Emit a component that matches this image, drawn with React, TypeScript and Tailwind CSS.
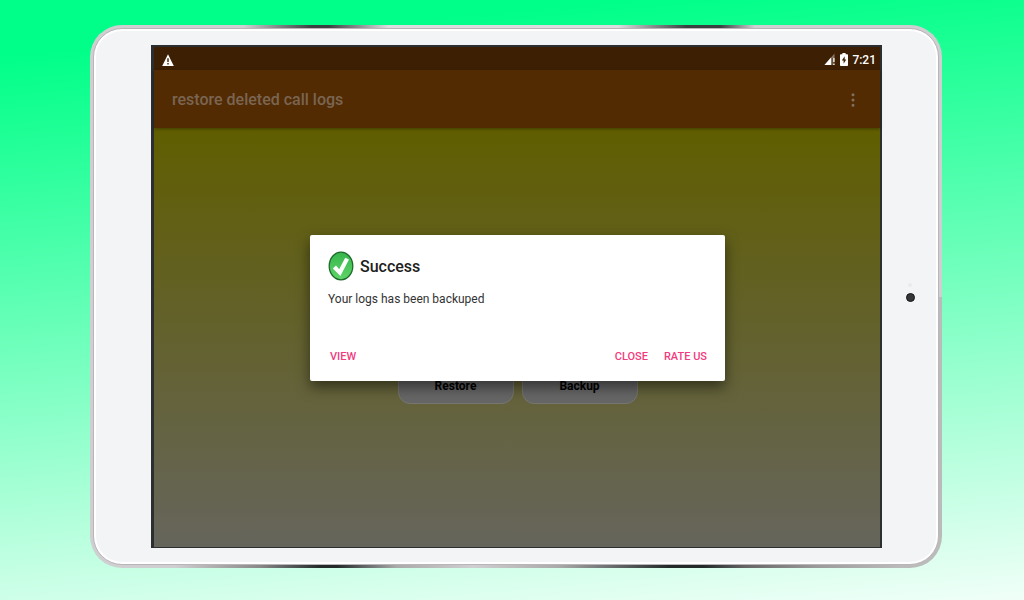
import { MoreVertical } from "lucide-react";

function WarningIcon() {
  return (
    <svg viewBox="0 0 12 12" className="size-3" aria-hidden="true">
      <path d="M6 0.3 11.8 12H0.2Z" fill="#fff" />
      <path d="M5.3 4.2h1.4v3.9H5.3zM5.3 9h1.4v1.4H5.3z" fill="#3d2004" />
    </svg>
  );
}

function SignalIcon() {
  return (
    <svg viewBox="0 0 12 13" className="h-[13px] w-3" aria-hidden="true">
      <path d="M10.5 0.5V5H8.6v7H0.5Z" fill="#8a7664" />
      <path d="M7 4.6V12H0.5Z" fill="#fff" />
      <path d="M9.2 5h1.4v4.2H9.2zM9.2 10.4h1.4V12H9.2z" fill="#fff" />
    </svg>
  );
}

function BatteryIcon() {
  return (
    <svg viewBox="0 0 8 13" className="h-[13px] w-2" aria-hidden="true">
      <path d="M2.4 0h3.2v1.2H7.2q.8 0 .8.8V12.2q0 .8-.8.8H.8Q0 13 0 12.2V2Q0 1.2.8 1.2H2.4Z" fill="#fff" />
      <path d="M4.7 3.3 1.8 7.6H3.6V10.8L6.3 6.5H4.7Z" fill="#3d2004" />
    </svg>
  );
}

function SuccessIcon() {
  return (
    <svg viewBox="0 0 26 30" className="h-[30px] w-[26px]" aria-hidden="true">
      <defs>
        <linearGradient id="disc" x1="0" y1="0" x2="0" y2="1">
          <stop offset="0" stopColor="#36b54c" />
          <stop offset="1" stopColor="#5fd668" />
        </linearGradient>
      </defs>
      <ellipse cx="13" cy="15" rx="11.8" ry="13.8" fill="url(#disc)" stroke="#1d6b2c" strokeWidth="1.3" />
      <path d="M4.8 17.6 8 14.4 11.2 18.2 17.2 6.8 21 8.6 12.4 25Z" fill="#fff" />
    </svg>
  );
}

function StatusBar() {
  return (
    <div className="flex h-[23px] items-center justify-between bg-[#3d2004] pt-0.5 pr-1 pl-2 text-white">
      <WarningIcon />
      <div className="flex items-center gap-1 text-xs font-medium">
        <SignalIcon />
        <BatteryIcon />
        <span>7:21</span>
      </div>
    </div>
  );
}

function AppBar() {
  return (
    <header className="flex h-[58px] items-center justify-between bg-[#522b03] pt-0.5 pr-[17px] pl-[18px] shadow-[0_1px_3px_rgba(0,0,0,0.35)]">
      <h1 className="text-base font-medium text-[#7a6552]">restore deleted call logs</h1>
      <button type="button" aria-label="More options" className="text-[#82705f]">
        <MoreVertical className="h-[18px] w-5" strokeWidth={2} />
      </button>
    </header>
  );
}

function SuccessDialog() {
  return (
    <div
      role="dialog"
      aria-labelledby="dialog-title"
      className="absolute top-[188px] right-[155px] left-[156px] flex h-[146px] flex-col rounded-xs bg-white px-[18px] pt-4 pb-3 shadow-[0_6px_14px_rgba(0,0,0,0.5)]"
    >
      <div className="flex items-center gap-1.5">
        <SuccessIcon />
        <h2 id="dialog-title" className="pt-0.5 text-base font-medium text-[#202020]">Success</h2>
      </div>
      <p className="mt-2 text-xs leading-5 text-[#333]">Your logs has been backuped</p>
      <div className="mt-auto flex items-center pl-0.5 text-[11px] leading-6 font-medium text-[#f23b7e]">
        <button type="button" className="mr-auto">VIEW</button>
        <button type="button" className="mr-4">CLOSE</button>
        <button type="button">RATE US</button>
      </div>
    </div>
  );
}

export default function App() {
  return (
    <main className="flex min-h-screen bg-[linear-gradient(175deg,#00ff88_8%,#f0fff8_100%)] pt-[25px] pr-[82px] pb-8 pl-[90px] font-[Roboto,sans-serif]">
      {/* Tablet rim, with the dark reflections along its top and bottom edges */}
      <div className="flex flex-1 rounded-[32px] bg-[#cfcfd1] bg-[linear-gradient(90deg,#cfcfd1_18%,#3a4040_26%,#3a4040_28%,#dcdcde_35%,#dcdcde_62%,#3a4040_70%,#3a4040_74%,#cfcfd1_78%),linear-gradient(90deg,#cfcfd1_10%,#888_20%,#222a2a_27%,#222a2a_29%,#aaa_36%,#cfcfd1_45%,#aaa_55%,#222a2a_68%,#222a2a_72%,#666_77%,#999_85%,#bbb_95%)] bg-[size:100%_50%] bg-[position:top,bottom] bg-no-repeat p-[3px]">
        <div className="flex flex-1 items-stretch rounded-[29px] border border-[#b9b5b8] bg-[#f3f4f6] pt-4 pb-4 pl-[57px] shadow-[inset_0_0_0_2px_#fff]">
          {/* Screen */}
          <div className="relative flex flex-1 flex-col border-2 border-b border-l-[3px] border-[#2b2f30] bg-[linear-gradient(180deg,#605e00_16%,#66655c_100%)]">
            <StatusBar />
            <AppBar />
            <div className="flex justify-center gap-2 pt-[228px] pl-px text-xs font-bold text-black">
              <button type="button" className="h-12 w-[116px] rounded-xl border border-[#77766f] bg-[#666] pt-3">Restore</button>
              <button type="button" className="h-12 w-[116px] rounded-xl border border-[#77766f] bg-[#666] pt-3">Backup</button>
            </div>
            <SuccessDialog />
          </div>

          {/* Camera */}
          <div className="flex w-14 flex-col items-center justify-center gap-1.5 pb-2">
            <span className="size-1 rounded-full bg-[#e9eaec]" />
            <span className="size-[9px] rounded-full border border-[#151515] bg-[#343638]" />
          </div>
        </div>
      </div>
    </main>
  );
}
